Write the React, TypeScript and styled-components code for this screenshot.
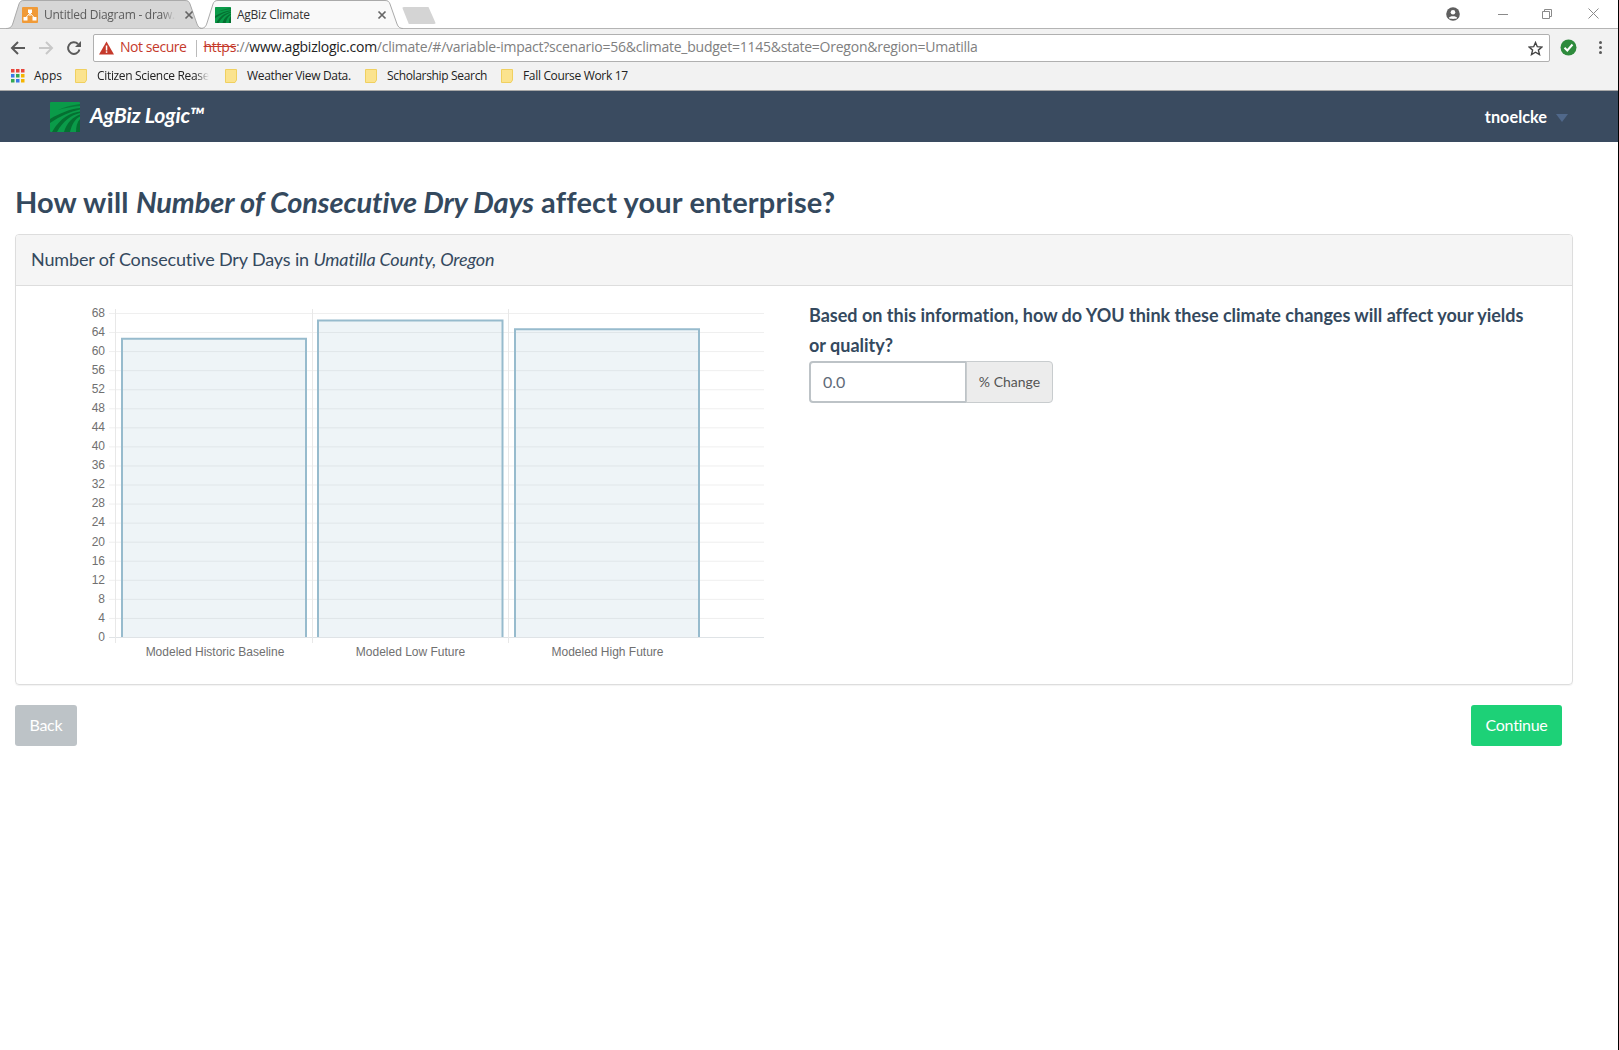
import { createGlobalStyle, styled } from 'styled-components'

const GlobalStyle = createGlobalStyle`
	html, body {
		margin: 0;
		padding: 0;
		background: #fff;
	}
	* {
		box-sizing: border-box;
	}
`

const Y_TICKS = Array.from({ length: 18 }, (_, i) => i * 4)
const BARS = [
	{ x: 122, width: 184, value: 62.6, label: 'Modeled Historic Baseline', center: 215 },
	{ x: 318, width: 184.5, value: 66.4, label: 'Modeled Low Future', center: 410.5 },
	{ x: 515, width: 184, value: 64.6, label: 'Modeled High Future', center: 607.5 },
]
const BOOKMARKS = [
	{ label: 'Citizen Science Rease', width: 150, faded: true },
	{ label: 'Weather View Data.', width: 140, faded: false },
	{ label: 'Scholarship Search', width: 136, faded: false },
	{ label: 'Fall Course Work 17', width: 140, faded: false },
]
const yFor = (value: number) => 637 - (value / 68) * 324

const TabShape = ({ width, active }: { width: number; active?: boolean }) => (
	<TabSvg width={width} height={29} viewBox={`0 0 ${width} 29`}>
		<path
			d={`M0 28.5 C5 28.5 6 26 7 23 L13 4 C14 1.5 15 0.5 18 0.5 L${width - 18} 0.5 C${width - 15} 0.5 ${width - 14} 1.5 ${width - 13} 4 L${width - 6} 24 C${width - 5} 27 ${width - 3} 28.5 ${width} 28.5`}
			fill={active ? '#f9f9f9' : '#d6d6d6'}
			stroke="#aaa"
		/>
	</TabSvg>
)

const AgBizMark = ({ size, radius = 1 }: { size: number; radius?: number }) => (
	<svg width={size} height={size} viewBox="0 0 30 30" aria-hidden="true">
		<rect width="30" height="30" rx={radius} fill="#0a9b49" />
		<path d="M30 6 C20 7 10 11 0 17 L0 21 C10 14 20 9.500 30 7.500Z" fill="#056f31" />
		<path d="M30 9.500 C20 11 11 15 2 30 L7 30 C13 19 21 13 30 11Z" fill="#056f31" />
		<path d="M30 12.500 C23 15 17 20 14 30 L20 30 C22 22 25 17 30 14.500Z" fill="#056f31" />
		<path d="M30 17 C27 20 26 25 26 30 L30 30Z" fill="#056f31" />
		<path d="M30 2 C22 3 14 5 8 8 C15 6 23 4.500 30 4Z" fill="#087a39" />
	</svg>
)

const DrawioMark = () => (
	<svg width={16} height={16} viewBox="0 0 16 16" aria-hidden="true">
		<rect width="16" height="16" rx="1" fill="#f09a37" />
		<path d="M8 6 L3.500 11 M8 6 L12.500 11 M8 5 L8 9" stroke="#fff" strokeWidth="1" />
		<rect x="6" y="2.500" width="4" height="3.500" fill="#fff" />
		<rect x="1.500" y="10" width="4" height="3.500" fill="#fff" />
		<rect x="10.500" y="10" width="4" height="3.500" fill="#fff" />
	</svg>
)

const CloseGlyph = () => (
	<svg width={10} height={10} viewBox="0 0 10 10" aria-hidden="true">
		<path d="M1.500 1.500 L8.500 8.500 M8.500 1.500 L1.500 8.500" stroke="#666" strokeWidth="1.700" />
	</svg>
)

const NavArrow = ({ flip, color }: { flip?: boolean; color: string }) => (
	<svg width={16} height={16} viewBox="0 0 16 16" aria-hidden="true" style={flip ? { transform: 'scaleX(-1)' } : undefined}>
		<path d="M15 8 H2 M8 2 L2 8 L8 14" fill="none" stroke={color} strokeWidth="2" />
	</svg>
)

const ReloadGlyph = () => (
	<svg width={16} height={16} viewBox="0 0 16 16" aria-hidden="true">
		<path d="M13.500 9.500 A5.800 5.800 0 1 1 12 4" fill="none" stroke="#5a5a5a" strokeWidth="2" />
		<path d="M15 1 V7 H9Z" fill="#5a5a5a" />
	</svg>
)

const WarningGlyph = () => (
	<svg width={15} height={14} viewBox="0 0 15 14" aria-hidden="true">
		<path d="M7.500 0.500 L15 13.500 H0Z" fill="#c5392b" />
		<rect x="6.800" y="4.500" width="1.500" height="5" fill="#fff" />
		<rect x="6.800" y="10.300" width="1.500" height="1.500" fill="#fff" />
	</svg>
)

const StarGlyph = () => (
	<svg width={15} height={15} viewBox="0 0 15 15" aria-hidden="true">
		<path d="M7.500 1.500 L9.300 5.700 L13.900 6.100 L10.400 9.100 L11.500 13.600 L7.500 11.200 L3.500 13.600 L4.600 9.100 L1.100 6.100 L5.700 5.700Z" fill="none" stroke="#444" strokeWidth="1.400" />
	</svg>
)

const ShieldCheck = () => (
	<svg width={17} height={17} viewBox="0 0 17 17" aria-hidden="true">
		<circle cx="8.500" cy="8.500" r="8" fill="#2e8b3d" />
		<path d="M4.500 8.800 L7.300 11.500 L12.500 5.500" fill="none" stroke="#fff" strokeWidth="2" />
	</svg>
)

const AccountGlyph = () => (
	<svg width={14} height={14} viewBox="0 0 14 14" aria-hidden="true">
		<circle cx="7" cy="7" r="6.800" fill="#5f5f5f" />
		<circle cx="7" cy="5.200" r="2.300" fill="#fff" />
		<path d="M2.800 11 C3.500 8.800 10.500 8.800 11.200 11 C10 12.200 4 12.200 2.800 11Z" fill="#fff" />
	</svg>
)

const AppsGlyph = () => (
	<svg width={14} height={14} viewBox="0 0 14 14" aria-hidden="true">
		{['#e8453c', '#e8453c', '#e8453c', '#3b78e7', '#34a853', '#f4b400', '#34a853', '#3b78e7', '#f4b400'].map((fill, i) => (
			<rect key={i} x={(i % 3) * 5} y={Math.floor(i / 3) * 5} width="3.500" height="3.500" fill={fill} />
		))}
	</svg>
)

const FolderGlyph = () => (
	<svg width={12} height={14} viewBox="0 0 12 14" aria-hidden="true">
		<path d="M0.500 0.500 H11.500 V11 L10 13.500 H0.500Z" fill="#fbe38e" stroke="#f0d060" />
	</svg>
)

const Chart = () => (
	<svg width={756} height={366} viewBox="16 300 756 366" role="img" aria-label="Number of Consecutive Dry Days chart">
		{Y_TICKS.map(tick => (
			<g key={tick}>
				<line x1={109} x2={764} y1={yFor(tick) + 0.5} y2={yFor(tick) + 0.5} stroke={tick === 0 ? '#dfe3e6' : '#efefef'} />
				<text x={105} y={yFor(tick) + 3.8} textAnchor="end" fontFamily="'Liberation Sans', Arial, sans-serif" fontSize="12" fill="#707070">
					{tick}
				</text>
			</g>
		))}
		{[115, 312, 508].map(x => (
			<line key={x} x1={x + 0.5} x2={x + 0.5} y1={309} y2={643} stroke="#e8e8e8" />
		))}
		{BARS.map(bar => (
			<g key={bar.label}>
				<rect x={bar.x} y={yFor(bar.value)} width={bar.width} height={637 - yFor(bar.value)} fill="rgba(151,187,205,0.16)" />
				<path
					d={`M${bar.x} 637 V${yFor(bar.value)} H${bar.x + bar.width} V637`}
					fill="none"
					stroke="#97bbcd"
					strokeWidth="2"
				/>
				<text x={bar.center} y={656} textAnchor="middle" fontFamily="'Liberation Sans', Arial, sans-serif" fontSize="12" fill="#707070">
					{bar.label}
				</text>
			</g>
		))}
	</svg>
)

const App = () => {
	return (
		<Screen>
			<GlobalStyle />
			<Browser>
				<TabStrip>
					<Tab $width={197} $startPad={16} $endPad={9}>
						<TabShape width={197} />
						<DrawioMark />
						<TabTitle $faded>Untitled Diagram - draw.io</TabTitle>
						<CloseGlyph />
					</Tab>
					<Tab $width={203} $startPad={15} $endPad={16} $active>
						<TabShape width={203} active />
						<AgBizMark size={16} />
						<TabTitle>AgBiz Climate</TabTitle>
						<CloseGlyph />
					</Tab>
					<NewTab />
					<WindowControls>
						<WindowButton $width={54}>
							<AccountGlyph />
						</WindowButton>
						<WindowButton $width={46}>
							<svg width={10} height={10} viewBox="0 0 10 10" aria-hidden="true">
								<path d="M0 5.500 H10" stroke="#8a8a8a" />
							</svg>
						</WindowButton>
						<WindowButton $width={42}>
							<svg width={10} height={10} viewBox="0 0 10 10" aria-hidden="true">
								<path d="M0.500 2.500 H7.500 V9.500 H0.500Z M2.500 2.500 V0.500 H9.500 V7.500 H7.500" fill="none" stroke="#8a8a8a" />
							</svg>
						</WindowButton>
						<WindowButton $width={50}>
							<svg width={11} height={11} viewBox="0 0 11 11" aria-hidden="true">
								<path d="M0.500 0.500 L10.500 10.500 M10.500 0.500 L0.500 10.500" stroke="#8a8a8a" />
							</svg>
						</WindowButton>
					</WindowControls>
				</TabStrip>
				<Toolbar>
					<NavButton>
						<NavArrow color="#5a5a5a" />
					</NavButton>
					<NavButton>
						<NavArrow flip color="#c8c8c8" />
					</NavButton>
					<NavButton>
						<ReloadGlyph />
					</NavButton>
					<AddressBar>
						<WarningGlyph />
						<NotSecure>
							<SecureText>Not secure</SecureText>
						</NotSecure>
						<Url>
							<Scheme>https</Scheme>://<Domain>www.agbizlogic.com</Domain>
							/climate/#/variable-impact?scenario=56&amp;climate_budget=1145&amp;state=Oregon&amp;region=Umatilla
						</Url>
						<StarSlot>
							<StarGlyph />
						</StarSlot>
					</AddressBar>
					<ExtensionSlot>
						<ShieldCheck />
					</ExtensionSlot>
					<MenuDots>
						<i />
						<i />
						<i />
					</MenuDots>
				</Toolbar>
				<BookmarkBar>
					<AppsLink>
						<AppsGlyph />
						<span>Apps</span>
					</AppsLink>
					{BOOKMARKS.map(bookmark => (
						<Bookmark key={bookmark.label} $width={bookmark.width}>
							<FolderGlyph />
							<BookmarkLabel $faded={bookmark.faded}>{bookmark.label}</BookmarkLabel>
						</Bookmark>
					))}
				</BookmarkBar>
			</Browser>

			<SiteHeader>
				<Brand>
					<AgBizMark size={30} />
					<BrandName>AgBiz Logic™</BrandName>
				</Brand>
				<UserMenu>
					<span>tnoelcke</span>
					<Caret />
				</UserMenu>
			</SiteHeader>

			<Main>
				<Title>
					How will <em>Number of Consecutive Dry Days</em> affect your enterprise?
				</Title>
				<Panel>
					<PanelHeading>
						Number of Consecutive Dry Days in <em>Umatilla County, Oregon</em>
					</PanelHeading>
					<PanelBody>
						<ChartColumn>
							<Chart />
						</ChartColumn>
						<QuestionColumn>
							<Question>
								Based on this information, how do YOU think these climate changes will affect your yields or quality?
							</Question>
							<InputGroup>
								<ChangeInput defaultValue="0.0" />
								<Addon>% Change</Addon>
							</InputGroup>
						</QuestionColumn>
					</PanelBody>
				</Panel>
				<Actions>
					<ActionButton $tone="muted">Back</ActionButton>
					<ActionButton $tone="go">Continue</ActionButton>
				</Actions>
			</Main>
		</Screen>
	)
}

const Screen = styled.div`
	min-height: 100vh;
	border-right: 1px solid #000;
	background: #fff;
	font-family: Lato, 'Open Sans', sans-serif;
	font-variant-ligatures: none;
	color: #34495e;
`
const Browser = styled.div`
	font-family: 'Open Sans', 'Noto Sans', sans-serif;
`
const TabStrip = styled.div`
	display: flex;
	align-items: flex-start;
	height: 28px;
	padding-left: 6px;
	background: #fff;
`
const Tab = styled.div<{ $width: number; $startPad: number; $endPad: number; $active?: boolean }>`
	position: relative;
	z-index: ${p => (p.$active ? 2 : 1)};
	flex: 0 0 ${p => p.$width}px;
	min-width: 0;
	height: 29px;
	margin-left: ${p => (p.$active ? -3 : 0)}px;
	padding: 7px ${p => p.$endPad}px 0 ${p => p.$startPad}px;
	display: flex;
	align-items: flex-start;
	gap: 6px;

	> svg:last-child {
		margin-top: 3px;
	}
`
const TabSvg = styled.svg`
	position: absolute;
	top: 0;
	left: 0;
	z-index: -1;
`
const TabTitle = styled.span<{ $faded?: boolean }>`
	flex: 1;
	min-width: 0;
	overflow: hidden;
	white-space: nowrap;
	font-size: 12px;
	line-height: 16px;
	letter-spacing: -0.25px;
	color: ${p => (p.$faded ? '#5c5c5c' : '#333')};
	${p => (p.$faded ? 'mask-image: linear-gradient(to right, #000 88%, transparent 98%);' : '')}
`
const NewTab = styled.div`
	flex: 0 0 34px;
	height: 17px;
	margin: 7px 0 0 -1px;
	background: #d4d4d4;
	border-radius: 2px;
	clip-path: polygon(0 0, 78% 0, 100% 100%, 20% 100%);
`
const WindowControls = styled.div`
	margin-left: auto;
	display: flex;
	height: 27px;
`
const WindowButton = styled.div<{ $width: number }>`
	flex: 0 0 ${p => p.$width}px;
	display: flex;
	align-items: center;
	justify-content: center;
`
const Toolbar = styled.div`
	height: 33px;
	padding: 5px 0 0 4px;
	display: flex;
	align-items: flex-start;
	background: #f2f2f2;
	border-top: 1px solid #b4b4b4;
`
const NavButton = styled.div`
	flex: 0 0 28px;
	height: 27px;
	display: flex;
	align-items: center;
	justify-content: center;
`
const AddressBar = styled.div`
	flex: 0 0 1457px;
	height: 28px;
	margin-left: 5px;
	padding: 0 5px;
	display: flex;
	align-items: center;
	background: #fff;
	border: 1px solid #b0b0b0;
	border-radius: 2px;
`
const NotSecure = styled.span`
	display: flex;
	align-items: center;
	height: 17px;
	margin-left: 6px;
	padding-right: 9px;
	border-right: 1px solid #bbb;
`
const SecureText = styled.span`
	margin-top: -4px;
	font-size: 14px;
	letter-spacing: -0.45px;
	color: #c5392b;
`
const Url = styled.span`
	flex: 1;
	margin: -3px 0 0 7px;
	font-size: 14px;
	letter-spacing: -0.24px;
	white-space: nowrap;
	color: #808080;
`
const Scheme = styled.span`
	color: #c5392b;
	text-decoration: line-through;
`
const Domain = styled.span`
	color: #222;
`
const StarSlot = styled.span`
	display: flex;
	margin-right: 1px;
`
const ExtensionSlot = styled.div`
	flex: 0 0 37px;
	height: 27px;
	display: flex;
	align-items: center;
	justify-content: center;
`
const MenuDots = styled.div`
	flex: 0 0 26px;
	height: 27px;
	display: flex;
	flex-direction: column;
	align-items: center;
	justify-content: center;
	gap: 2px;

	i {
		width: 3px;
		height: 3px;
		background: #5a5a5a;
		border-radius: 50%;
	}
`
const BookmarkBar = styled.div`
	height: 30px;
	padding-left: 11px;
	display: flex;
	align-items: center;
	background: #f2f2f2;
	border-bottom: 1px solid #a8a8a8;
	font-size: 12px;
	color: #222;
`
const AppsLink = styled.div`
	flex: 0 0 64px;
	display: flex;
	align-items: center;
	gap: 9px;
`
const Bookmark = styled.div<{ $width: number }>`
	flex: 0 0 ${p => p.$width}px;
	display: flex;
	align-items: center;
	gap: 10px;
`
const BookmarkLabel = styled.span<{ $faded?: boolean }>`
	white-space: nowrap;
	letter-spacing: -0.33px;
	${p => (p.$faded ? 'width: 112px; overflow: hidden; mask-image: linear-gradient(to right, #000 88%, transparent);' : '')}
`
const SiteHeader = styled.header`
	height: 51px;
	padding: 0 50px;
	display: flex;
	align-items: center;
	justify-content: space-between;
	background: #3a4b60;
	color: #fff;
`
const Brand = styled.div`
	display: flex;
	align-items: center;
	gap: 10px;
`
const BrandName = styled.span`
	margin-bottom: 3px;
	font-size: 21.2px;
	font-weight: 700;
	font-style: italic;
	letter-spacing: -0.2px;
`
const UserMenu = styled.div`
	display: flex;
	align-items: center;
	gap: 9px;
	font-size: 16.3px;
	font-weight: 700;
`
const Caret = styled.span`
	width: 0;
	height: 0;
	margin-top: 3px;
	border-left: 6px solid transparent;
	border-right: 6px solid transparent;
	border-top: 8px solid #50688a;
`
const Main = styled.main`
	padding: 43px 45px 0 15px;
`
const Title = styled.h1`
	margin: 0 0 15px;
	font-size: 29px;
	font-weight: 700;
	line-height: 34px;
	letter-spacing: 0.15px;
	color: #34495e;

	em {
		letter-spacing: -0.14px;
	}
`
const Panel = styled.section`
	border: 1px solid #ddd;
	border-radius: 4px;
	box-shadow: 0 1px 1px rgba(0, 0, 0, 0.05);
`
const PanelHeading = styled.div`
	height: 51px;
	padding: 0 15px;
	background: #f5f5f5;
	border-bottom: 1px solid #ddd;
	border-radius: 3px 3px 0 0;
	font-size: 18px;
	line-height: 48px;
	letter-spacing: -0.15px;
`
const PanelBody = styled.div`
	height: 398px;
	display: flex;
`
const ChartColumn = styled.div`
	flex: 0 0 793px;
	padding-top: 14px;
`
const QuestionColumn = styled.div`
	flex: 1;
	padding: 14px 30px 0 0;
`
const Question = styled.p`
	margin: 0;
	font-size: 18px;
	font-weight: 700;
	line-height: 30px;
`
const InputGroup = styled.div`
	display: flex;
	width: 244px;
	height: 42px;
	margin-top: 1px;
`
const ChangeInput = styled.input`
	flex: 0 0 158px;
	width: 158px;
	padding: 0 12px 2px;
	border: 2px solid #bdc3c7;
	border-radius: 4px 0 0 4px;
	font-family: Lato, sans-serif;
	font-size: 16px;
	color: #5f6b78;
	outline: none;
`
const Addon = styled.span`
	flex: 1;
	display: flex;
	align-items: center;
	justify-content: center;
	margin-left: -1px;
	padding-bottom: 2px;
	background: #ececec;
	border: 1px solid #c8ccce;
	border-radius: 0 4px 4px 0;
	font-size: 14px;
	color: #555;
`
const Actions = styled.div`
	margin-top: 20px;
	padding-right: 11px;
	display: flex;
	justify-content: space-between;
`
const ActionButton = styled.button<{ $tone: 'muted' | 'go' }>`
	height: 41px;
	padding: 0 14.5px 2px;
	border: none;
	border-radius: 3px;
	background: ${p => (p.$tone === 'go' ? '#1dd177' : '#bdc3c7')};
	color: #fff;
	font-family: Lato, sans-serif;
	font-size: 16px;
	letter-spacing: -0.3px;
`

export default App
